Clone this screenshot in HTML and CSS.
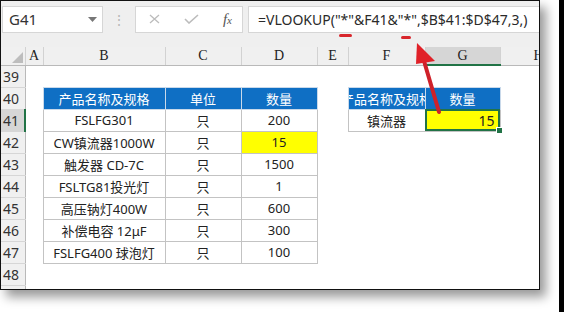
FILE: index.html
```html
<!DOCTYPE html>
<html lang="zh-CN">
<head>
    <meta charset="UTF-8">
    <title>VLOOKUP 通配符</title>
    <link rel="stylesheet" href="styles.css">
</head>
<body>
    <div class="page">
        <div class="window">
            <div class="toolbar">
                <div class="namebox">
                    <span>G41</span>
                    <svg class="caret" width="9" height="5" viewBox="0 0 9 5"><path d="M0 0h9L4.5 5z" fill="#777"/></svg>
                </div>
                <div class="grip">⋮</div>
                <div class="fxbtns">
                    <svg width="11" height="10" viewBox="0 0 11 10"><path d="M1 1l9 8M10 1l-9 8" stroke="#bcbcbc" stroke-width="1.3" fill="none"/></svg>
                    <svg width="15" height="10" viewBox="0 0 15 10"><path d="M1 5l4 4L14 1" stroke="#bcbcbc" stroke-width="1.6" fill="none"/></svg>
                    <span class="fx"><i>f</i><small>x</small></span>
                </div>
                <div class="formula">=VLOOKUP("*"&amp;F41&amp;"*",$B$41:$D$47,3,)</div>
            </div>

            <table class="sheet">
                <colgroup>
                    <col style="width:24px"><col style="width:18px"><col style="width:122px"><col style="width:76px">
                    <col style="width:76px"><col style="width:31px"><col style="width:77px"><col style="width:75px"><col style="width:39px">
                </colgroup>
                <tr class="colhead">
                    <th class="corner"><span class="tri"></span></th>
                    <th>A</th><th>B</th><th>C</th><th>D</th><th>E</th><th>F</th><th class="active">G</th><th class="clip">H</th>
                </tr>
                <tr><th class="rh">39</th><td></td><td></td><td></td><td></td><td></td><td></td><td></td><td></td></tr>
                <tr><th class="rh">40</th><td></td>
                    <td class="b hd">产品名称及规格</td><td class="b hd">单位</td><td class="b hd">数量</td><td></td>
                    <td class="b hd"><div class="over">产品名称及规格</div></td><td class="b hd">数量</td><td></td></tr>
                <tr><th class="rh active">41</th><td></td>
                    <td class="b">FSLFG301</td><td class="b">只</td><td class="b">200</td><td></td>
                    <td class="b">镇流器</td><td class="b yel sel">15<span class="handle"></span></td><td></td></tr>
                <tr><th class="rh">42</th><td></td>
                    <td class="b">CW镇流器1000W</td><td class="b">只</td><td class="b yel">15</td><td></td><td></td><td></td><td></td></tr>
                <tr><th class="rh">43</th><td></td>
                    <td class="b">触发器 CD-7C</td><td class="b">只</td><td class="b">1500</td><td></td><td></td><td></td><td></td></tr>
                <tr><th class="rh">44</th><td></td>
                    <td class="b">FSLTG81投光灯</td><td class="b">只</td><td class="b">1</td><td></td><td></td><td></td><td></td></tr>
                <tr><th class="rh">45</th><td></td>
                    <td class="b">高压钠灯400W</td><td class="b">只</td><td class="b">600</td><td></td><td></td><td></td><td></td></tr>
                <tr><th class="rh">46</th><td></td>
                    <td class="b">补偿电容 12μF</td><td class="b">只</td><td class="b">300</td><td></td><td></td><td></td><td></td></tr>
                <tr><th class="rh">47</th><td></td>
                    <td class="b">FSLFG400 球泡灯</td><td class="b">只</td><td class="b">100</td><td></td><td></td><td></td><td></td></tr>
                <tr><th class="rh">48</th><td></td><td></td><td></td><td></td><td></td><td></td><td></td><td></td></tr>
                <tr><th class="rh"></th><td></td><td></td><td></td><td></td><td></td><td></td><td></td><td></td></tr>
            </table>

            <svg class="marks" width="538" height="288" viewBox="0 0 538 288">
                <rect x="338" y="33" width="13" height="3" rx="1.5" fill="#d8262c"/>
                <rect x="400" y="35" width="10" height="3" rx="1.5" fill="#d8262c"/>
                <path d="M438 111L423 60" stroke="#cf2129" stroke-width="4" stroke-linecap="round" fill="none"/>
                <path d="M416 42L434 60L415 63z" fill="#e02128"/>
            </svg>
        </div>
        <div class="edge"></div>
    </div>
</body>
</html>
```

FILE: styles.css
```css
body {
    margin: 0;
    background: #fff;
    font-family: "Noto Sans", "Noto Sans CJK SC", sans-serif;
    overflow: hidden;
}

.page {
    display: flex;
    height: 312px;
}

.window {
    position: relative;
    width: 538px;
    height: 288px;
    border: 1px solid #111;
    background: #fff;
    overflow: hidden;
    box-shadow: 6px 7px 10px rgba(0, 0, 0, 0.4);
}

.edge {
    width: 5px;
    margin-left: auto;
    background: #000;
}

/* formula bar */
.toolbar {
    display: flex;
    align-items: center;
    height: 46px;
    padding: 0 0 0 1px;
    background: #efefef;
    box-sizing: border-box;
}

.namebox, .fxbtns, .formula {
    height: 27px;
    margin-top: -10px;
    background: #fff;
    border: 1px solid #d6d6d6;
    box-sizing: border-box;
    display: flex;
    align-items: center;
}

.namebox {
    width: 101px;
    padding: 0 5px 0 6px;
    justify-content: space-between;
    font-size: 15px;
    color: #333;
}

.grip {
    width: 32px;
    margin-top: -10px;
    text-align: center;
    color: #b8b8b8;
    font-size: 14px;
}

.fxbtns {
    width: 108px;
    padding: 0 10px 0 13px;
    justify-content: space-between;
}

.fx {
    font-family: "Liberation Serif", serif;
    color: #555;
    font-size: 15px;
}

.fx small { font-size: 11px; font-style: italic; }

.formula {
    flex: 1;
    margin-left: 5px;
    border-right: none;
    padding-left: 9px;
    font-size: 14px;
    color: #2a2a2a;
    white-space: nowrap;
}

/* grid */
.sheet {
    table-layout: fixed;
    width: 538px;
    border-collapse: collapse;
    font-size: 13px;
    color: #222;
}

.sheet tr { height: 22px; }

.sheet td {
    padding: 0;
    text-align: center;
    white-space: nowrap;
    overflow: hidden;
}

.colhead { height: 17px !important; }

.colhead th {
    height: 17px;
    padding: 0;
    background: #f0f0f0;
    border-right: 1px solid #d2d2d2;
    border-bottom: 1px solid #b9b9b9;
    font-family: "Liberation Serif", serif;
    font-weight: normal;
    font-size: 14px;
    color: #222;
    overflow: hidden;
}

.colhead th.active {
    background: #d6d6d6;
    border-bottom: 2px solid #217346;
}

.colhead th.clip { text-align: left; text-indent: 33px; }

.corner { position: relative; }

.tri {
    position: absolute;
    right: 2px;
    bottom: 2px;
    border-style: solid;
    border-width: 0 0 11px 11px;
    border-color: transparent transparent #bdbdbd transparent;
}

.rh {
    padding: 0 0 1px 2px;
    background: #f0f0f0;
    border-right: 1px solid #b9b9b9;
    border-bottom: 1px solid #d6d6d6;
    text-align: left;
    vertical-align: bottom;
    font-weight: normal;
    font-size: 14px;
    color: #333;
}

.rh.active {
    background: #d6d6d6;
    border-right: 2px solid #217346;
}

.b { border: 1px solid #c3c3c3; }

.hd {
    background: #0f6fc4;
    color: #fff;
    border-color: #c9d9ea;
}

.over {
    display: flex;
    justify-content: center;
    white-space: nowrap;
}

.yel { background: #ffff00; }

.sel {
    position: relative;
    text-align: right !important;
    padding-right: 5px !important;
    font-size: 14px;
    outline: 2px solid #217346;
    outline-offset: -2px;
    overflow: visible !important;
}

.handle {
    position: absolute;
    right: -3px;
    bottom: -3px;
    width: 5px;
    height: 5px;
    background: #217346;
    border: 1px solid #fff;
}

.marks {
    position: absolute;
    left: 0;
    top: 0;
    pointer-events: none;
}
```
